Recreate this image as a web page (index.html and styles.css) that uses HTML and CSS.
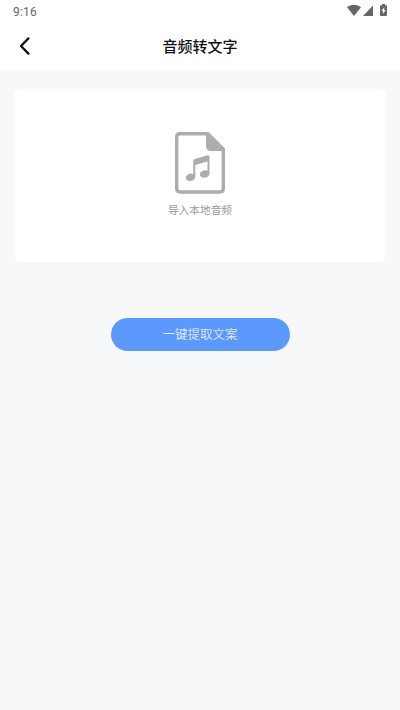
FILE: index.html
```html
<!DOCTYPE html>
<html lang="zh-CN">
<head>
<meta charset="utf-8">
<meta name="viewport" content="width=device-width, initial-scale=1">
<title>音频转文字</title>
<link rel="stylesheet" href="styles.css">
</head>
<body>
<header class="header">
  <div class="status">
    <span class="time">9:16</span>
    <svg class="status-icons" width="42" height="14" viewBox="0 0 42 14" fill="#666">
      <path d="M0 3.2C4-.2 10-.2 14 3.2L7 12Z"/>
      <path d="M26 1.5V12H16Z"/>
      <path fill-rule="evenodd" d="M35 1.2V0h3v1.2h1q1 0 1 1V11q0 1-1 1h-5q-1 0-1-1V2.200q0-1 1-1ZM37.200 3.300 34.500 7h1.600v3l2.500-4h-1.400Z"/>
    </svg>
  </div>
  <nav class="nav">
    <button class="back" aria-label="返回">
      <svg width="12" height="20" viewBox="0 0 12 20"><path d="M9.400 2.400 2 10l7.400 7.600" fill="none" stroke="#111" stroke-width="2.300" stroke-linecap="round" stroke-linejoin="round"/></svg>
    </button>
    <h1 class="title">音频转文字</h1>
  </nav>
</header>
<main class="content">
  <section class="upload">
    <svg class="file" width="50" height="62" viewBox="0 0 50 62">
      <path d="M5 1.700H32L48.300 18V56.500Q48.300 60 44.800 60H5.200Q1.700 60 1.700 56.500V5Q1.700 1.700 5 1.700Z" fill="none" stroke="#adadad" stroke-width="3.400"/>
      <path d="M31 0H33.500L50 16.500V19H36Q31 19 31 14Z" fill="#adadad"/>
      <g fill="#adadad">
        <ellipse cx="15.500" cy="45.300" rx="4.800" ry="3.700" transform="rotate(-15 15.500 45.300)"/>
        <ellipse cx="29.700" cy="42" rx="4.800" ry="3.700" transform="rotate(-15 29.700 42)"/>
        <path fill-rule="evenodd" d="M18.300 45.500V28.800Q18.300 27.300 19.800 26.900L32.500 23.300Q34.500 22.800 34.500 24.800V42H32.500V29.500L20.300 33V45.500Z"/>
      </g>
    </svg>
    <span class="caption">导入本地音频</span>
  </section>
  <button class="extract">一键提取文案</button>
</main>
</body>
</html>
```
FILE: styles.css
```css
* { box-sizing: border-box; }
body {
  margin: 0;
  min-height: 710px;
  background: #f6f8fa;
  font-family: Roboto, "Noto Sans CJK SC", sans-serif;
}
button { border: 0; padding: 0; font-family: inherit; }
svg { display: block; }
.header { height: 71px; background: #fff; border-bottom: 1px solid #f8f9fa; }
.status {
  display: flex;
  justify-content: space-between;
  height: 22px;
  padding: 4px 11px 0 13px;
}
.time { color: #666; font-size: 12px; line-height: 16px; letter-spacing: .2px; }
.nav {
  display: grid;
  grid-template-columns: 40px 1fr 40px;
  align-items: center;
  height: 48px;
}
.back { display: flex; padding-left: 19px; background: none; }
.title { margin: 0; padding-top: 2px; color: #111; font-size: 15px; font-weight: 500; line-height: 22px; text-align: center; }
.content { display: flex; flex-direction: column; align-items: center; padding: 18px 14px 0; }
.upload {
  display: flex;
  flex-direction: column;
  align-items: center;
  width: 100%;
  height: 173px;
  padding-top: 43px;
  border-radius: 8px;
  background: #fff;
}
.caption { margin-top: 9px; color: #999; font-size: 10.7px; line-height: 16px; }
.extract {
  width: 179px;
  height: 33px;
  margin-top: 56px;
  border-radius: 17px;
  background: #5b99ff;
  color: #fff;
  font-size: 12.500px;
  font-weight: 300;
  line-height: 33px;
}
```
